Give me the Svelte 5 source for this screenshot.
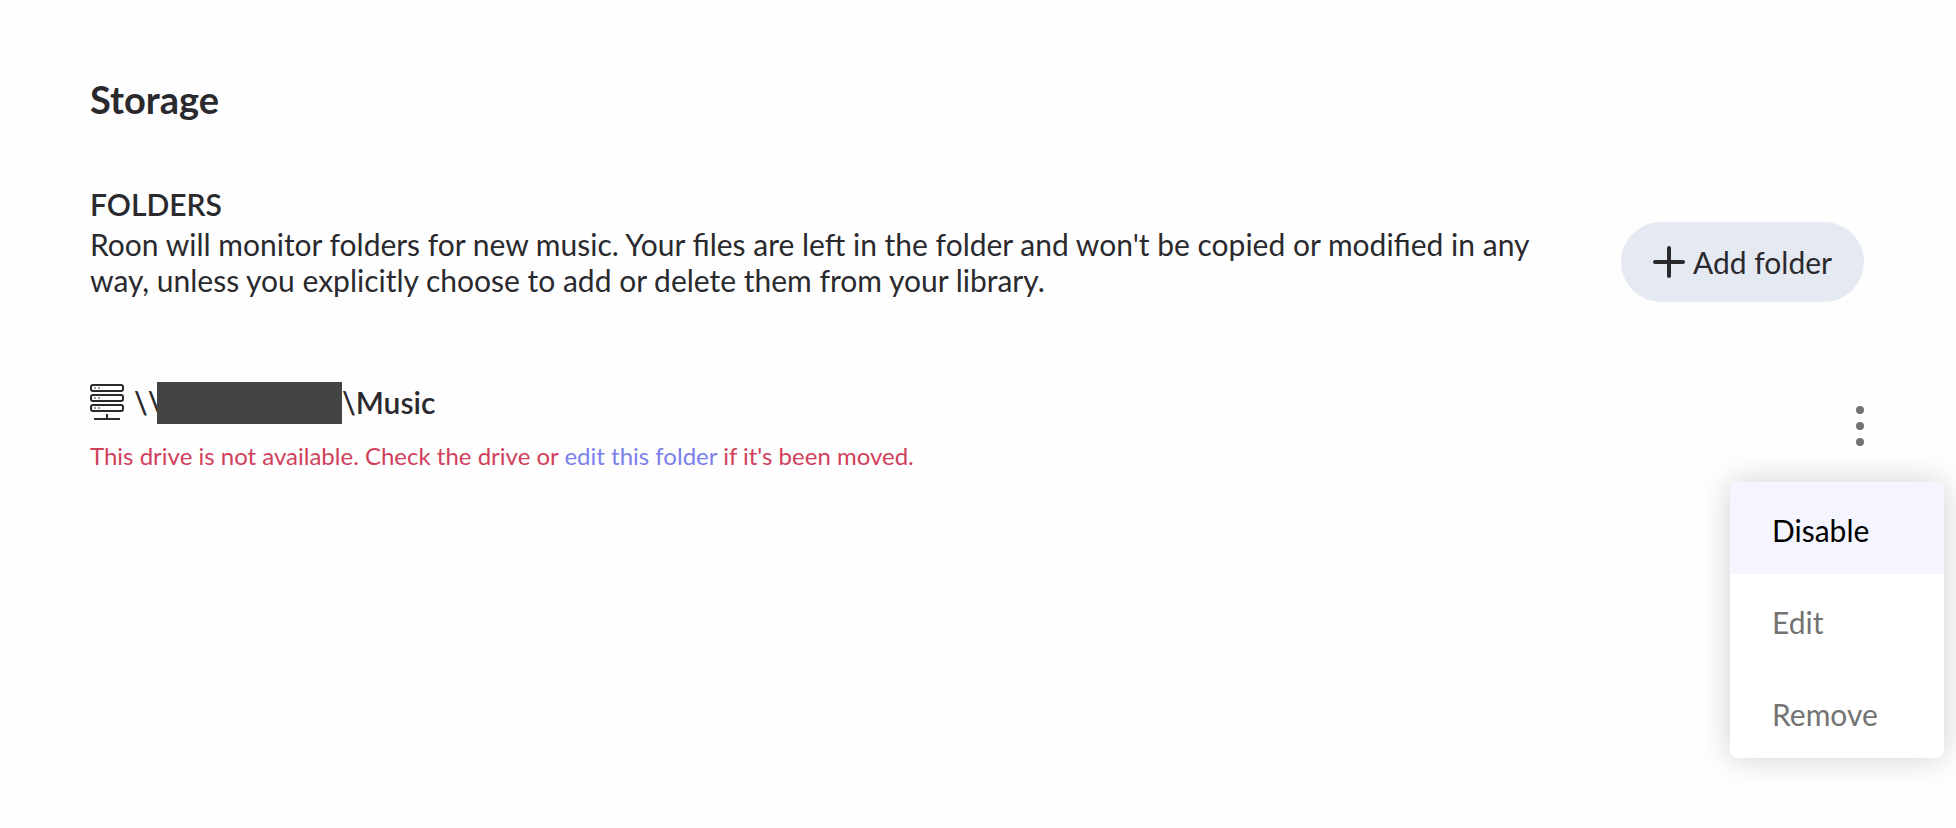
<script>
  const actions = ['Disable', 'Edit', 'Remove'];
  let selected = $state('Disable');
  let open = $state(true);
</script>

<main>
  <h1>Storage</h1>

  <section aria-labelledby="folders-title">
    <h2 id="folders-title">FOLDERS</h2>
    <div class="intro">
      <p>
        Roon will monitor folders for new music. Your files are left in the folder and won't be
        copied or modified in any way, unless you explicitly choose to add or delete them from your
        library.
      </p>
      <button class="add" type="button">
        <svg width="32" height="32" viewBox="0 0 32 32" aria-hidden="true">
          <path d="M16 2V30M2 16H30" fill="none" stroke="currentColor" stroke-width="4" stroke-linecap="round" />
        </svg>
        Add folder
      </button>
    </div>
  </section>

  <section class="folder" aria-label="Music folder">
    <div class="details">
      <div class="path">
        <svg class="drive" width="34" height="38" viewBox="0 0 34 38" aria-hidden="true">
          <g fill="none" stroke="currentColor" stroke-width="2">
            <rect x="1" y="1" width="32" height="6" rx="2" />
            <rect x="1" y="11" width="32" height="6" rx="2" />
            <rect x="1" y="21" width="32" height="6" rx="2" />
            <path d="M17 30V35M4 35H30" />
          </g>
          <path d="M4 3h2v2h-2zM8 3h2v2h-2zM4 13h2v2h-2zM8 13h2v2h-2zM4 23h2v2h-2zM8 23h2v2h-2z" fill="#97979a" />
        </svg>
        <strong class="host">{'\\\\'}</strong><span class="hidden-name"></span><strong>{'\\Music'}</strong>
      </div>
      <p class="error">
        This drive is not available. Check the drive or <a href="#edit">edit this folder</a> if it's been moved.
      </p>
    </div>

    <div class="options">
      <button class="dots" type="button" aria-label="Folder options" aria-expanded={open} onclick={() => (open = !open)}>
        <svg width="8" height="40" viewBox="0 0 8 40" fill="currentColor" aria-hidden="true">
          <circle cx="4" cy="4" r="4" />
          <circle cx="4" cy="20" r="4" />
          <circle cx="4" cy="36" r="4" />
        </svg>
      </button>
      {#if open}
        <div class="menu" role="menu">
          {#each actions as action}
            <button type="button" role="menuitem" class:active={selected === action} onmouseenter={() => (selected = action)}>{action}</button>
          {/each}
        </div>
      {/if}
    </div>
  </section>
</main>

<style>
  :global(body) {
    background: #fefefe;
  }
  main {
    box-sizing: border-box;
    min-height: 100vh;
    padding: 78px 92px 60px 90px;
    font-family: Lato, sans-serif;
    font-size: 30px;
    line-height: 36px;
    color: #2a2a2e;
  }
  h1, h2, p {
    margin: 0;
  }
  h1 {
    font-size: 38px;
    line-height: 42px;
    font-weight: 700;
    margin-bottom: 66px;
  }
  h2 {
    font-size: 30px;
    line-height: 36px;
    font-weight: 600;
  }
  button {
    border: 0;
    padding: 0;
    background: none;
    font: inherit;
    color: inherit;
    cursor: pointer;
  }
  .intro {
    display: flex;
    align-items: center;
    justify-content: space-between;
    gap: 48px;
  }
  .add {
    display: flex;
    flex: none;
    align-items: center;
    gap: 8px;
    height: 80px;
    padding: 0 32px;
    border-radius: 40px;
    background: #e5e9f2;
  }
  .folder {
    display: flex;
    align-items: center;
    justify-content: space-between;
    margin-top: 80px;
  }
  .path {
    display: flex;
    align-items: center;
    height: 42px;
    margin-bottom: 18px;
  }
  .drive {
    margin-right: 10px;
  }
  .host {
    width: 23px;
  }
  .hidden-name {
    width: 185px;
    height: 42px;
    background: #444;
  }
  strong {
    padding-bottom: 2px;
    font-weight: 600;
  }
  .error {
    font-size: 24px;
    line-height: 28px;
    color: #d1405b;
  }
  a {
    color: #7b80ed;
    text-decoration: none;
  }
  .options {
    position: relative;
  }
  .dots {
    display: block;
    color: #737373;
  }
  .dots svg {
    display: block;
  }
  .menu {
    position: absolute;
    top: 76px;
    right: -80px;
    width: 214px;
    border-radius: 8px;
    overflow: hidden;
    background: #fff;
    color: #737373;
    box-shadow: 0 0 32px rgba(0, 0, 0, 0.18);
  }
  .menu button {
    display: block;
    width: 100%;
    height: 92px;
    padding: 4px 42px 0;
    text-align: left;
  }
  .menu .active {
    background: #f4f5fe;
    color: #000;
  }
</style>
